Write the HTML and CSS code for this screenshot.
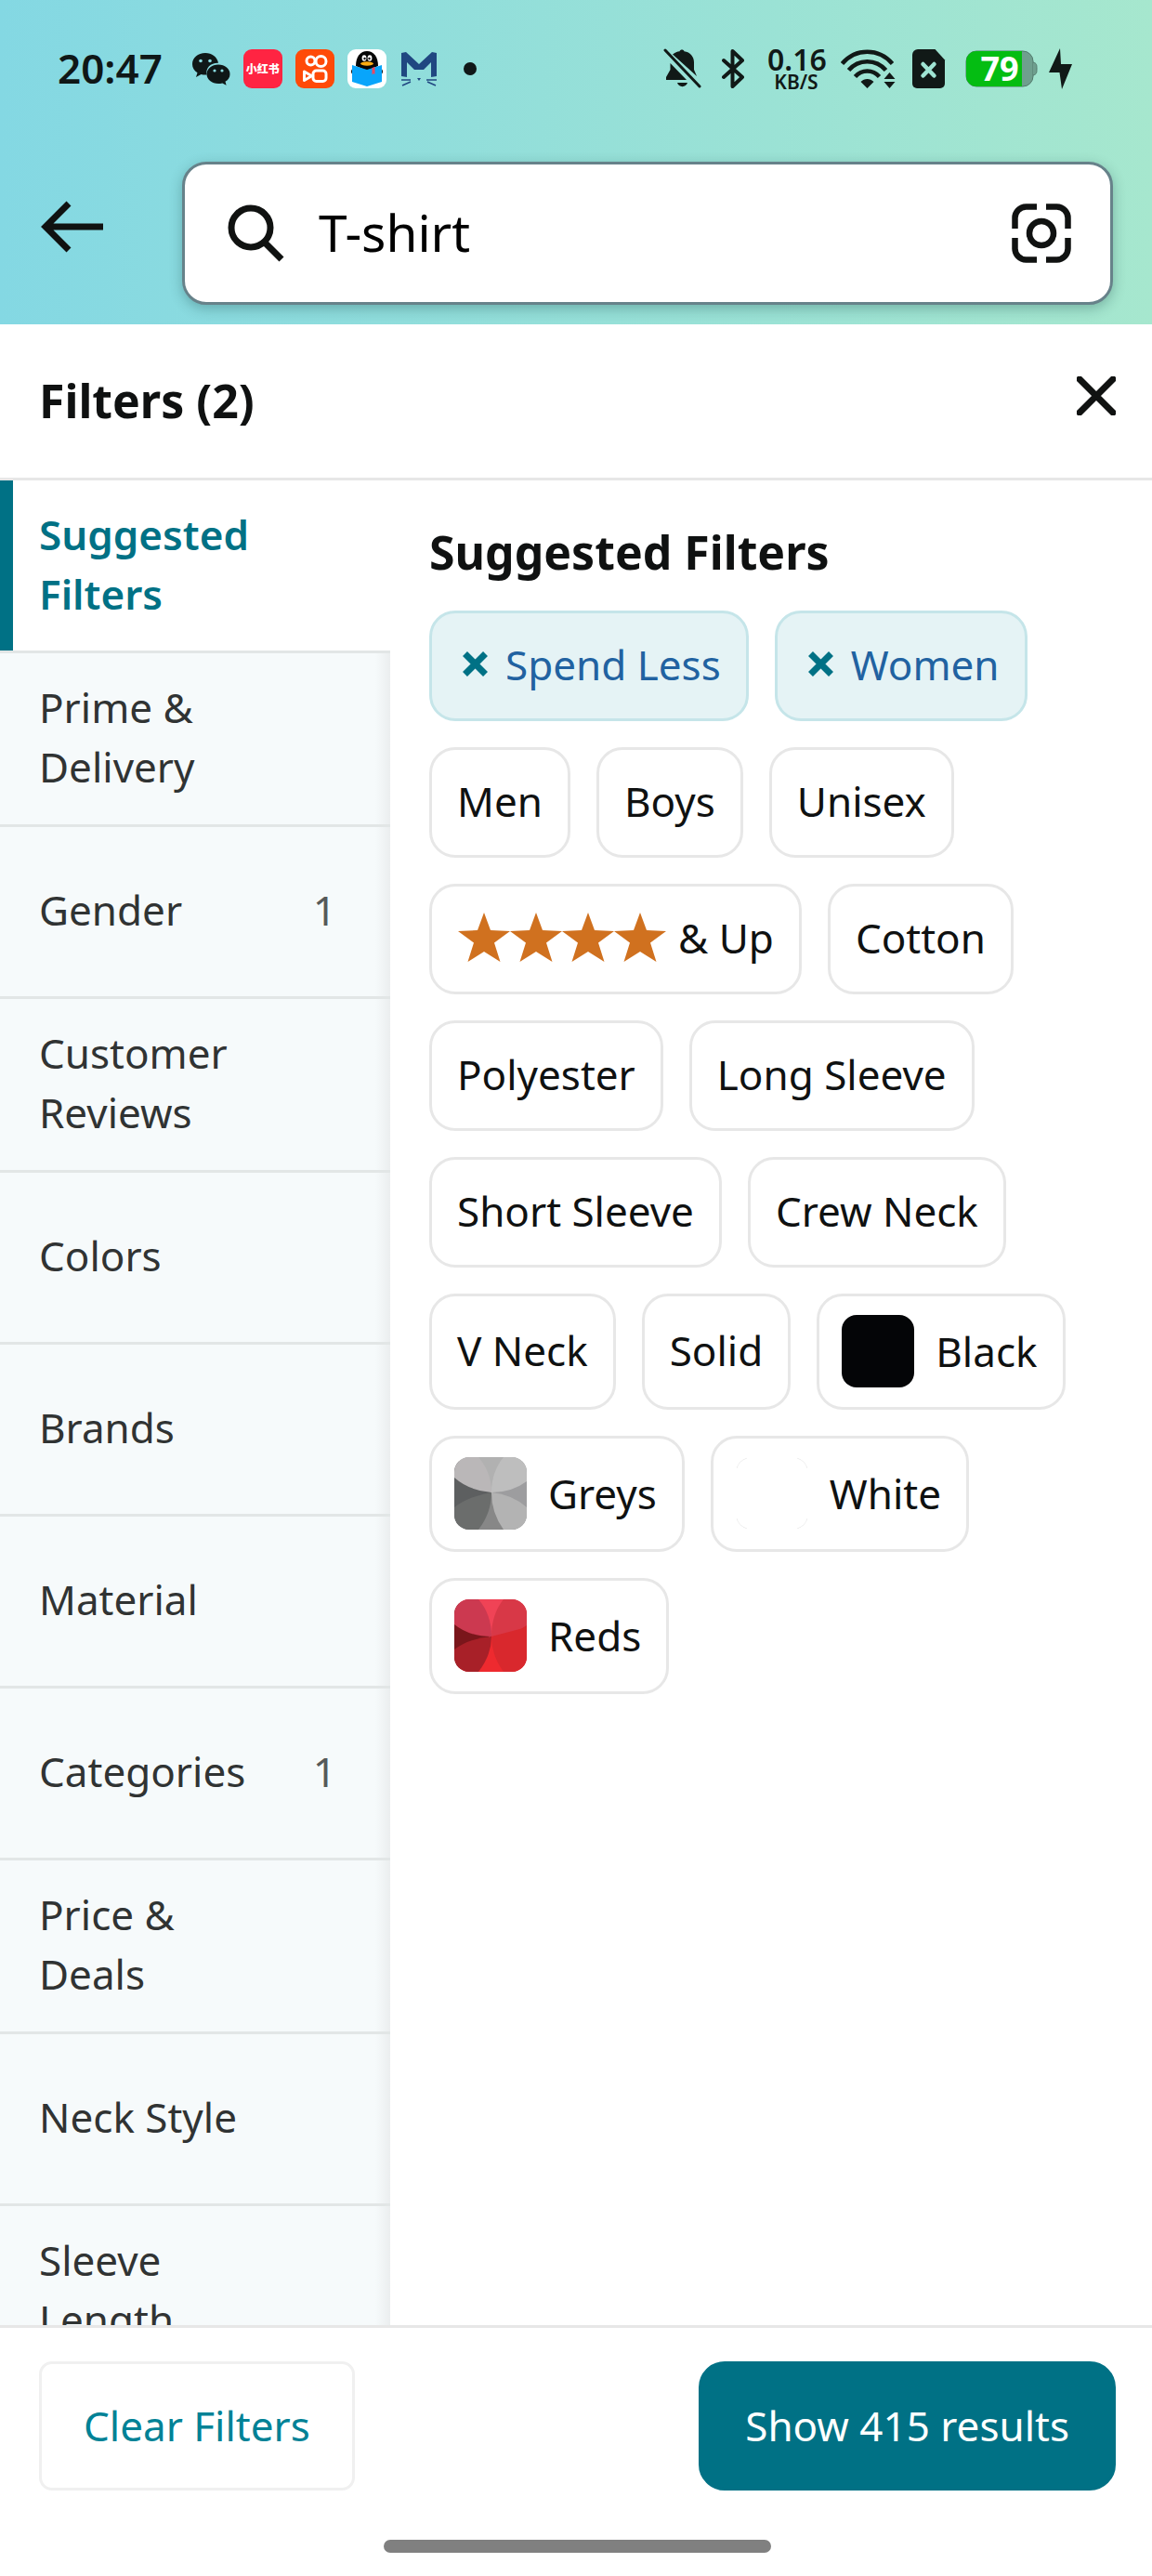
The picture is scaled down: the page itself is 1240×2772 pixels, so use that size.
FILE: index.html
```html
<!DOCTYPE html>
<html lang="en">
<head>
<meta charset="utf-8">
<meta name="viewport" content="width=device-width, initial-scale=1">
<title>T-shirt filters</title>
<link rel="stylesheet" href="styles.css">
</head>
<body>
<div class="app">
  <header class="top">
    <div class="status">
      <div class="status-left">
        <span class="clock">20:47</span>
        <svg width="41" height="42" viewBox="0 0 41 42" aria-hidden="true">
          <path fill="#0f1717" d="M14 4C6 4 0 9.300 0 16c0 4 2 7 5.500 9.300L4 30l5.500-3c1.500.4 3 .6 4.500.6l1.500-.1C14 20 20 14.500 28 14.800 27 8.500 21 4 14 4z"/>
          <path fill="#0f1717" d="M28 16.500c-7 0-12.500 4.500-12.500 10.200S21 37 28 37c1.500 0 3-.2 4.300-.6l4.300 2.300-1.100-3.900C39 32.800 40.500 30 40.500 26.700 40.500 21 35 16.500 28 16.500z"/>
          <g fill="#89dae0"><circle cx="9" cy="12.500" r="1.800"/><circle cx="19" cy="12.500" r="1.800"/><circle cx="24" cy="23" r="1.600"/><circle cx="32" cy="23" r="1.600"/></g>
        </svg>
        <span class="note-app">小红书</span>
        <svg width="42" height="42" viewBox="0 0 42 42" aria-hidden="true">
          <rect width="42" height="42" rx="9" fill="#ff4a08"/>
          <g fill="none" stroke="#fff" stroke-width="3"><circle cx="16.500" cy="12.500" r="4.500"/><circle cx="27.500" cy="13" r="5.500"/><rect x="19" y="23" width="14" height="11.500" rx="3.500"/><path stroke-linejoin="round" d="M9.500 24v9.500l8-4.700z"/></g>
        </svg>
        <svg width="42" height="42" viewBox="0 0 42 42" aria-hidden="true">
          <rect width="42" height="42" rx="9" fill="#fff"/>
          <ellipse cx="7" cy="24" rx="3" ry="3" fill="#111"/><ellipse cx="35" cy="24" rx="3" ry="3" fill="#111"/>
          <path fill="#060606" d="M9 18C9 8 14 2 21 2s12 6 12 16l-12 5z"/>
          <ellipse cx="18" cy="9.500" rx="2.400" ry="3.200" fill="#fff"/><ellipse cx="24" cy="9.500" rx="2.400" ry="3.200" fill="#fff"/>
          <circle cx="18.500" cy="10" r="1.200"/><circle cx="23.500" cy="10" r="1.200"/>
          <path fill="#08a5fb" d="M5 17l16 5 16-5v18l-16 5-16-5z"/>
          <ellipse cx="21" cy="15.500" rx="7" ry="2.200" fill="#fbab12"/>
          <path fill="#f4475f" d="M26.500 20l3-1v8l-1.500-1-1.500 1.500z"/>
        </svg>
        <svg width="41" height="42" viewBox="0 0 41 42" aria-hidden="true">
          <path fill="#204781" d="M2 4l5-1 14 13L35 3l5 1v25l-6 1V14l-8 8H16l-8-8v16l-6-1z"/>
          <path stroke="#204781" stroke-width="1.500" fill="none" d="M2 33h10M3 39l9-4M29 33h11M30 35l9 4"/>
          <path fill="#204781" d="M19 31h4l-2 3z"/>
        </svg>
        <svg class="more-dot" width="14" height="14" viewBox="0 0 14 14" aria-hidden="true"><circle cx="7" cy="7" r="7" fill="#101818"/></svg>
      </div>
      <div class="status-right">
        <svg width="51" height="44" viewBox="0 0 51 44" aria-hidden="true">
          <path fill="#111917" d="M10 6.500C12.500 4.500 15 3.500 17.500 3.200 18 1 22 1 22.500 3.200 29 4 33 9 33 15v8l3 7zM7.500 16l17.500 18H3v-3l4.500-8zM15 37h11c-1.500 5.500-9.500 5.500-11 0z"/>
          <path stroke="#111917" stroke-width="3" stroke-linecap="round" d="M2 2l37 39"/>
        </svg>
        <svg width="37" height="44" viewBox="0 0 37 44" aria-hidden="true">
          <path fill="none" stroke="#111917" stroke-width="4" stroke-linejoin="round" stroke-linecap="round" d="M2 13l20 18-10.500 10V3L22 13 2 31"/>
        </svg>
        <span class="net"><span class="net-rate">0.16</span><span class="net-unit">KB/S</span></span>
        <svg width="65" height="44" viewBox="0 0 65 44" aria-hidden="true">
          <g fill="none" stroke="#111917" stroke-width="4.500"><path d="M1.500 16.500C16-.5 41-.5 55.500 16.500"/><path d="M8.500 23.500c10.500-12.500 29.500-12.500 40 0"/><path d="M15.500 30.500c7-8 19-8 26 0"/></g>
          <path fill="#111917" d="M21.500 36c4-4 10-4 14 0l-7 7zM52.500 26l6 7h-12zM46.500 36h12l-6 7z"/>
        </svg>
        <svg width="45" height="44" viewBox="0 0 45 44" aria-hidden="true">
          <path fill="#111917" d="M6 1h18.500L35 12.500V38a5 5 0 0 1-5 5H5a5 5 0 0 1-5-5V7a6 6 0 0 1 6-6z"/>
          <path stroke="#9fe4d3" stroke-width="4.500" stroke-linecap="round" d="M11.500 17l12 12.500M23.500 17l-12 12.500"/>
        </svg>
        <svg width="78" height="44" viewBox="0 0 78 44" aria-hidden="true">
          <rect x="1" y="3" width="72" height="38" rx="11" fill="#6f9f8e" stroke="#52796c" stroke-width="1"/>
          <path fill="#6f9f8e" stroke="#52796c" stroke-width="1" d="M73 15c4 1 4 3 4 7s0 6-4 7"/>
          <path fill="#04bd12" d="M12 3h49v38H12A11 11 0 0 1 1 30V14A11 11 0 0 1 12 3z"/>
          <text x="37" y="35" text-anchor="middle" class="battery-level">79</text>
        </svg>
        <svg width="25" height="44" viewBox="0 0 25 44" aria-hidden="true"><path fill="#111917" d="M12 0L0 26h11.500L14 44l11-27H13z"/></svg>
      </div>
    </div>
    <div class="search-row">
      <button class="icon-button back" type="button" aria-label="Back">
        <svg width="68" height="56" viewBox="0 0 68 56"><path fill="none" stroke="#101211" stroke-width="7" d="M67 28H5M30 3L5 28l25 25"/></svg>
      </button>
      <form class="search">
        <svg width="62" height="62" viewBox="0 0 62 62" aria-hidden="true"><circle cx="25" cy="25" r="21" fill="none" stroke="#101211" stroke-width="7"/><path stroke="#101211" stroke-width="7" d="M39.500 40.500L58 59"/></svg>
        <input class="search-input" type="text" value="T-shirt" aria-label="Search">
        <button class="icon-button" type="button" aria-label="Search with camera">
          <svg width="64" height="64" viewBox="0 0 64 64"><g fill="none" stroke="#101211" stroke-width="6.500"><path d="M3.500 27V16a12 12 0 0 1 12-12.500H27M37 3.500h11.500A12 12 0 0 1 60.500 16v11M60.500 37v11a12 12 0 0 1-12 12.500H37M27 60.500H15.500A12 12 0 0 1 3.500 48V37"/><circle cx="32" cy="32" r="13"/></g></svg>
        </button>
      </form>
    </div>
  </header>

  <div class="title-row">
    <h1 class="heading">Filters (2)</h1>
    <button class="icon-button close" type="button" aria-label="Close">
      <svg width="42" height="42" viewBox="0 0 42 42"><path stroke="#101211" stroke-width="7" stroke-linecap="round" d="M3 3l36 36M39 3L3 39"/></svg>
    </button>
  </div>

  <main class="content">
    <nav class="sidebar" aria-label="Filter groups">
      <a class="tab tab-active" href="#suggested"><span class="tab-label">Suggested Filters</span></a>
      <a class="tab" href="#prime"><span class="tab-label">Prime &amp; Delivery</span></a>
      <a class="tab" href="#gender"><span class="tab-label">Gender</span><span class="tab-count">1</span></a>
      <a class="tab" href="#reviews"><span class="tab-label">Customer Reviews</span></a>
      <a class="tab" href="#colors"><span class="tab-label">Colors</span></a>
      <a class="tab" href="#brands"><span class="tab-label">Brands</span></a>
      <a class="tab" href="#material"><span class="tab-label">Material</span></a>
      <a class="tab" href="#categories"><span class="tab-label">Categories</span><span class="tab-count">1</span></a>
      <a class="tab" href="#price"><span class="tab-label">Price &amp; Deals</span></a>
      <a class="tab" href="#neck"><span class="tab-label">Neck Style</span></a>
      <a class="tab" href="#sleeve"><span class="tab-label">Sleeve Length</span></a>
    </nav>

    <section class="panel" id="suggested">
      <h2 class="heading">Suggested Filters</h2>
      <div class="chips">
        <div class="chip-row">
          <button class="chip chip-on" type="button" aria-pressed="true"><svg width="40" height="28" viewBox="0 0 40 28" aria-hidden="true"><path stroke="#007185" stroke-width="7" d="M8.500 2.500l22 22M30.500 2.500l-22 22"/></svg>Spend Less</button>
          <button class="chip chip-on" type="button" aria-pressed="true"><svg width="40" height="28" viewBox="0 0 40 28" aria-hidden="true"><path stroke="#007185" stroke-width="7" d="M8.500 2.500l22 22M30.500 2.500l-22 22"/></svg>Women</button>
        </div>
        <div class="chip-row">
          <button class="chip" type="button">Men</button>
          <button class="chip" type="button">Boys</button>
          <button class="chip" type="button">Unisex</button>
        </div>
        <div class="chip-row">
          <button class="chip" type="button" aria-label="4 stars &amp; Up">
            <svg width="226" height="54" viewBox="0 0 226 54" aria-hidden="true">
              <defs><path id="star" d="M29 0l7 19 21 1-17 12.500L46.500 53 29 42 11.500 53 18 32.500 1 20l21-1z"/></defs>
              <g fill="#d0711f"><use href="#star"/><use href="#star" x="56"/><use href="#star" x="112"/><use href="#star" x="168"/></g>
            </svg>&amp; Up</button>
          <button class="chip" type="button">Cotton</button>
        </div>
        <div class="chip-row">
          <button class="chip" type="button">Polyester</button>
          <button class="chip" type="button">Long Sleeve</button>
        </div>
        <div class="chip-row">
          <button class="chip" type="button">Short Sleeve</button>
          <button class="chip" type="button">Crew Neck</button>
        </div>
        <div class="chip-row">
          <button class="chip" type="button">V Neck</button>
          <button class="chip" type="button">Solid</button>
          <button class="chip chip-color" type="button"><span class="swatch swatch-black"></span>Black</button>
        </div>
        <div class="chip-row">
          <button class="chip chip-color" type="button">
            <svg class="swatch" viewBox="0 0 78 78" aria-hidden="true">
              <path fill="#b1b1b1" d="M0 0h78L40 38z"/><path fill="#9d9d9f" d="M78 0v78L40 38z"/><path fill="#878787" d="M0 78h78L40 38z"/><path fill="#5d5f60" d="M0 0v78l40-40z"/>
              <path fill="#bab7b8" d="M0 0h26q14 16 14 38Q16 36 0 22z"/>
              <path fill="#bebebe" d="M78 0H53Q40 16 40 38q22 0 38-12z"/>
              <path fill="#6b6d6c" d="M0 78h26q14-18 14-40Q16 42 0 54z"/>
              <path fill="#b3b3b3" d="M78 78H53Q40 60 40 38q22 2 38 16z"/>
            </svg>Greys</button>
          <button class="chip chip-color" type="button">
            <svg class="swatch" viewBox="0 0 78 78" aria-hidden="true"><path fill="none" stroke="#ececec" stroke-width="1" d="M1 12Q3 4 12 1M66 1q9 3 11 11M77 66q-2 8-11 11M12 77q-9-3-11-11"/></svg>White</button>
        </div>
        <div class="chip-row">
          <button class="chip chip-color" type="button">
            <svg class="swatch" viewBox="0 0 78 78" aria-hidden="true">
              <path fill="#f04356" d="M0 0h78L40 38z"/><path fill="#d9262c" d="M78 0v78L40 38z"/><path fill="#ee2a2f" d="M0 78h78L40 38z"/><path fill="#7a161b" d="M0 0v78l40-40z"/>
              <path fill="#cc3950" d="M0 0h26q14 16 14 40Q16 40 0 27z"/>
              <path fill="#d83847" d="M78 0H53Q40 16 40 40q22 0 38-12z"/>
              <path fill="#a82028" d="M0 78h26q14-18 14-38Q16 42 0 54z"/>
              <path fill="#d9282d" d="M78 78H53Q40 60 40 40l38-10z"/>
            </svg>Reds</button>
        </div>
      </div>
    </section>
  </main>

  <footer class="footer">
    <div class="actions">
      <button class="action action-clear" type="button">Clear Filters</button>
      <button class="action action-show" type="button">Show 415 results</button>
    </div>
    <div class="home-bar"></div>
  </footer>
</div>
</body>
</html>
```
FILE: styles.css
```css
* {
  box-sizing: border-box;
}

body {
  margin: 0;
  background: #fff;
  color: #0f1111;
  font-family: "Noto Sans", "Noto Sans CJK SC", sans-serif;
  font-size: 44px;
  line-height: 64px;
}

button,
input {
  font: inherit;
  color: inherit;
}

svg {
  display: block;
  flex: none;
}

.app {
  display: flex;
  flex-direction: column;
  height: 100vh;
  overflow: hidden;
}

/* Header */
.top {
  background: linear-gradient(to right, #84d8e3, #a6e7ce);
  padding-bottom: 21px;
}

.status {
  display: flex;
  justify-content: space-between;
  align-items: center;
  height: 148px;
  padding: 0 86px 0 62px;
}

.status-left,
.status-right {
  display: flex;
  align-items: center;
}

.status-left {
  gap: 14px;
}

.status-right {
  gap: 12px;
}

.clock {
  margin-right: 18px;
  font-weight: 600;
  line-height: 60px;
  padding-bottom: 2px;
  color: #0f1717;
}

.note-app {
  width: 42px;
  border-radius: 9px;
  background: #ff2442;
  color: #fff;
  font-family: "Noto Sans CJK SC", sans-serif;
  font-size: 12px;
  font-weight: 900;
  line-height: 42px;
  text-align: center;
}

.more-dot {
  margin-left: 14px;
}

.net {
  width: 67px;
  color: #111917;
  font-weight: 600;
}

.net-rate,
.net-unit {
  display: block;
  width: 62px;
  text-align: center;
}

.net-rate {
  font-size: 32px;
  line-height: 28px;
}

.net-unit {
  font-size: 21px;
  line-height: 20px;
}

.battery-level {
  fill: #fff;
  font-size: 36px;
  font-weight: 700;
}

.search-row {
  display: flex;
  align-items: center;
  gap: 84px;
  padding: 26px 42px 0 44px;
}

.icon-button {
  flex: none;
  padding: 0;
  border: 0;
  background: none;
}

.back {
  padding-bottom: 14px;
}

.search {
  flex: 1;
  min-width: 0;
  display: flex;
  align-items: center;
  gap: 36px;
  height: 154px;
  padding: 0 42px 0 46px;
  border: 3px solid #67828a;
  border-radius: 26px;
  background: #fff;
  box-shadow: 0 4px 14px rgba(15, 60, 60, 0.3);
}

.search-input {
  flex: 1;
  min-width: 0;
  width: 100%;
  padding: 0 0 2px;
  border: 0;
  outline: 0;
  background: none;
  font-size: 55px;
  line-height: 76px;
  color: #000;
}

/* Title */
.title-row {
  display: flex;
  justify-content: space-between;
  align-items: center;
  height: 168px;
  padding: 0 39px 0 42px;
  border-bottom: 3px solid #e7e7e7;
}

.heading {
  margin: 0;
  padding-bottom: 2px;
  font-size: 50px;
  font-weight: 700;
  line-height: 64px;
}

.close {
  padding-bottom: 12px;
}

/* Filter groups and options */
.content {
  flex: 1;
  min-height: 0;
  display: grid;
  grid-template-columns: 21fr 41fr;
  overflow: hidden;
}

.sidebar {
  min-height: 0;
}

.tab {
  display: flex;
  align-items: center;
  gap: 20px;
  min-height: 185px;
  padding: 26px 58px 30px 42px;
  border-bottom: 3px solid #e2e6e6;
  background: linear-gradient(to left, #ebeeef, #f6fafb 16px);
  color: #303333;
  text-decoration: none;
}

.tab-active {
  padding: 26px 58px 29px 42px;
  background: linear-gradient(to right, #007185 14px, #fff 14px) padding-box;
  color: #007185;
  font-weight: 600;
}

.tab-label {
  flex: 0 1 250px;
}

.tab-count {
  flex: 1;
  color: #565959;
  text-align: right;
}

.panel {
  padding: 45px 42px 0;
}

.chips {
  display: flex;
  flex-direction: column;
  gap: 28px;
  margin-top: 29px;
}

.chip-row {
  display: flex;
  gap: 28px;
}

.chip {
  display: flex;
  align-items: center;
  gap: 12px;
  min-height: 119px;
  padding: 0 27px 4px;
  border: 3px solid #e7e7e7;
  border-radius: 28px;
  background: #fff;
  white-space: nowrap;
}

.chip-on {
  border-color: #c5e5e9;
  background: #e5f3f5;
  color: #2162a1;
}

.chip-color {
  gap: 23px;
  min-height: 125px;
  padding: 0 27px 2px 24px;
}

.swatch {
  width: 78px;
  height: 78px;
  border-radius: 16px;
}

.swatch-black {
  background: #040507;
}

/* Footer */
.footer {
  padding: 36px 39px 25px 42px;
  border-top: 3px solid #e7e7e7;
  background: #fff;
}

.actions {
  display: flex;
  justify-content: space-between;
}

.action {
  height: 139px;
  padding: 0 45px 2px;
  border: 3px solid #f0f0f0;
  border-radius: 14px;
  background: #fff;
  color: #008296;
}

.action-show {
  padding: 0 47px 2px;
  border-color: #007185;
  border-radius: 28px;
  background: #007185;
  color: #fff;
}

.home-bar {
  width: 36%;
  height: 14px;
  margin: 53px auto 0;
  border-radius: 7px;
  background: #808080;
}
```
